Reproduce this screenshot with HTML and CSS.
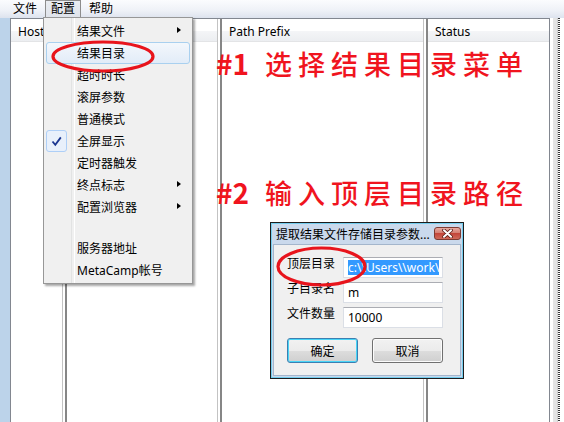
FILE: index.html
```html
<!DOCTYPE html>
<html lang="zh-CN">
<head>
    <meta charset="UTF-8">
    <title>配置 - 结果目录</title>
    <link rel="stylesheet" href="styles.css">
</head>
<body>
    <div class="window">
        <div class="menubar">
            <span class="menubar-item">文件</span>
            <span class="menubar-item open">配置</span>
            <span class="menubar-item">帮助</span>
        </div>

        <div class="main">
            <div class="frame-left"></div>
            <div class="listview">
                <div class="column col-host"><div class="col-head">Host</div></div>
                <div class="sep"></div>
                <div class="column col-name"><div class="col-head"></div></div>
                <div class="sep"></div>
                <div class="column col-path"><div class="col-head">Path Prefix</div></div>
                <div class="sep"></div>
                <div class="column col-status"><div class="col-head">Status</div></div>
            </div>
            <div class="frame-right">
                <div class="strip"></div>
                <div class="dots"></div>
            </div>
        </div>

        <!-- 配置 menu, opened -->
        <div class="dropdown">
            <div class="dropdown-item submenu">结果文件</div>
            <div class="dropdown-item hover">结果目录</div>
            <div class="dropdown-item">超时时长</div>
            <div class="dropdown-item">滚屏参数</div>
            <div class="dropdown-item">普通模式</div>
            <div class="dropdown-item">
                <span class="check">
                    <svg width="11" height="11" viewBox="0 0 11 11"><path d="M1.5 5.5 L4.3 8.8 L9.8 1.4" fill="none" stroke="#1a3590" stroke-width="1.8"/></svg>
                </span>
                全屏显示
            </div>
            <div class="dropdown-item">定时器触发</div>
            <div class="dropdown-item submenu">终点标志</div>
            <div class="dropdown-item submenu">配置浏览器</div>
            <div class="dropdown-item spaced">服务器地址</div>
            <div class="dropdown-item">MetaCamp帐号</div>
        </div>

        <div class="note note-1"><span class="note-num">#1</span><span class="note-text">选择结果目录菜单</span></div>
        <div class="note note-2"><span class="note-num">#2</span><span class="note-text">输入顶层目录路径</span></div>

        <div class="dialog">
            <div class="dlg-title">
                <span>提取结果文件存储目录参数...</span>
                <span class="dlg-close">
                    <svg width="11" height="9" viewBox="0 0 11 9">
                        <path d="M2 1.2 L9 7.8 M9 1.2 L2 7.8" stroke="#5b1e18" stroke-width="3.6" stroke-linecap="round"/>
                        <path d="M2 1.2 L9 7.8 M9 1.2 L2 7.8" stroke="#fff" stroke-width="2" stroke-linecap="round"/>
                    </svg>
                </span>
            </div>
            <div class="dlg-body">
                <label class="dlg-label">顶层目录</label>
                <div class="textbox"><span class="sel">c:\\Users\\work\</span></div>
                <label class="dlg-label">子目录名</label>
                <div class="textbox">m</div>
                <label class="dlg-label">文件数量</label>
                <div class="textbox">10000</div>
                <div class="dlg-buttons">
                    <button class="btn default">确定</button>
                    <button class="btn">取消</button>
                </div>
            </div>
        </div>

        <svg class="marks" width="564" height="422" viewBox="0 0 564 422">
            <ellipse cx="103" cy="56.5" rx="50" ry="14.5" fill="none" stroke="#e8141c" stroke-width="3.2"/>
            <ellipse cx="321.5" cy="266.5" rx="43.5" ry="18.5" fill="none" stroke="#e8141c" stroke-width="3.2"/>
        </svg>
    </div>
</body>
</html>
```

FILE: styles.css
```css
* {
    box-sizing: border-box;
}

body {
    margin: 0;
    font-family: "Noto Sans", "Noto Sans CJK SC", sans-serif;
    font-size: 12px;
    color: #000;
    background: #fff;
}

.window {
    position: relative;
    width: 564px;
    height: 422px;
    overflow: hidden;
    display: flex;
    flex-direction: column;
}

/* menu bar */
.menubar {
    height: 18px;
    flex: none;
    display: flex;
    gap: 2px;
    padding-left: 7px;
    background: linear-gradient(#fbfcfe, #eef1f7 60%, #dde3ee);
}

.menubar-item {
    padding: 0 5px;
    line-height: 15px;
    border: 1px solid transparent;
    border-bottom: none;
}

.menubar-item.open {
    border-color: #8d8d8d;
    background: linear-gradient(#e9ecf1, #dfe3ea);
}

/* list view */
.main {
    flex: 1;
    display: flex;
    min-height: 0;
}

.frame-left {
    width: 10px;
    background: #bcd3ea;
}

.listview {
    width: 540px;
    display: flex;
    border: 1px solid #828790;
    border-bottom: none;
    background: #fff;
}

.column {
    display: flex;
    flex-direction: column;
}

.col-host { width: 51px; }
.col-name { width: 150px; }
.col-path { width: 201px; }
.col-status { flex: 1; }

.col-head {
    height: 23px;
    padding: 4px 0 0 7px;
    background: linear-gradient(#fff 55%, #f4f5f7 56%, #eceef1);
    border-bottom: 1px solid #e3e4e6;
    white-space: nowrap;
    overflow: hidden;
}

.sep {
    width: 5px;
    border-left: 1px solid #c3c3c3;
    border-right: 2px solid #868686;
}

.frame-right {
    width: 14px;
    display: flex;
    padding-left: 3px;
}

.frame-right .strip {
    width: 5px;
    background: #e4e4e4;
    border-right: 1px solid #cfcfcf;
}

.frame-right .dots {
    width: 2px;
    background: repeating-linear-gradient(#3a3a3a 0 1px, #fff 1px 2px);
}

/* dropdown menu */
.dropdown {
    position: absolute;
    left: 43px;
    top: 17px;
    width: 150px;
    padding: 2px;
    background: #f0f0f0;
    border: 1px solid #979797;
    box-shadow: 2px 2px 2px rgba(0, 0, 0, 0.35);
}

.dropdown::before {
    content: "";
    position: absolute;
    left: 27px;
    top: 0;
    bottom: 0;
    width: 2px;
    border-left: 1px solid #e2e3e3;
    border-right: 1px solid #fff;
}

.dropdown-item {
    position: relative;
    height: 22px;
    padding-left: 30px;
    display: flex;
    align-items: center;
    border: 1px solid transparent;
    border-radius: 3px;
}

.dropdown-item.hover {
    border-color: #a9d0ef;
    background: linear-gradient(#f3f7fc, #e2ecf8);
}

.dropdown-item.spaced {
    margin-top: 19px;
}

.submenu::after {
    content: "";
    position: absolute;
    right: 8px;
    top: 6px;
    border-left: 4px solid #000;
    border-top: 3.5px solid transparent;
    border-bottom: 3.5px solid transparent;
}

.check {
    position: absolute;
    left: -1px;
    top: -1px;
    width: 21px;
    height: 22px;
    border: 1px solid #aecff7;
    border-radius: 3px;
    background: #e8f0fb;
    display: flex;
    align-items: center;
    justify-content: center;
}

/* red notes */
.note {
    position: absolute;
    left: 216px;
    display: flex;
    align-items: center;
    color: #f0141e;
    font-family: "Noto Sans CJK SC", sans-serif;
    font-weight: 500;
    line-height: 1;
    white-space: nowrap;
}

.note-num {
    font-size: 28px;
    font-weight: 700;
    width: 49px;
}

.note-text {
    font-size: 27px;
    letter-spacing: 6px;
}

.note-1 { top: 49px; }
.note-2 { top: 178px; }

/* dialog */
.dialog {
    position: absolute;
    left: 270px;
    top: 222px;
    width: 194px;
    height: 157px;
    padding: 0 2px 2px;
    border: 1px solid #1c1c1c;
    background: #cad9ec;
    box-shadow: inset 0 0 0 1px #74cdee;
    display: flex;
    flex-direction: column;
}

.dlg-title {
    height: 21px;
    flex: none;
    display: flex;
    align-items: center;
    justify-content: space-between;
    padding: 0 0 0 3px;
    white-space: nowrap;
}

.dlg-close {
    width: 27px;
    height: 13px;
    border: 1px solid #7c3b32;
    border-radius: 3px;
    background: linear-gradient(#e8a99f, #d47f72 45%, #c4463a 50%, #cf6a5a);
    display: flex;
    align-items: center;
    justify-content: center;
}

.dlg-body {
    flex: 1;
    background: #f0f0f0;
    border: 1px solid #a4b6cc;
    display: grid;
    grid-template-columns: 56px 100px;
    grid-auto-rows: min-content;
    row-gap: 4px;
    padding: 12px 0 0 13px;
    align-items: start;
}

.dlg-label {
    line-height: 13px;
}

.textbox {
    height: 21px;
    display: flex;
    align-items: center;
    padding-left: 4px;
    border: 1px solid #dbdfe6;
    border-top-color: #abadb3;
    background: #fff;
    white-space: nowrap;
    overflow: hidden;
}

.sel {
    background: #3399ff;
    color: #fff;
    line-height: 15px;
}

.dlg-buttons {
    grid-column: 1 / -1;
    display: flex;
    gap: 14px;
    margin-top: 6px;
}

.btn {
    width: 72px;
    height: 25px;
    padding: 0;
    font: inherit;
    color: #000;
    border: 1px solid #707070;
    border-radius: 3px;
    background: linear-gradient(#f2f2f2, #ebebeb 50%, #dddddd 51%, #cfcfcf);
    box-shadow: inset 0 0 0 1px #fcfcfc;
}

.btn.default {
    border-color: #3c7fb1;
    box-shadow: inset 0 0 0 1px #48d5f7;
}

.marks {
    position: absolute;
    left: 0;
    top: 0;
    pointer-events: none;
}
```
